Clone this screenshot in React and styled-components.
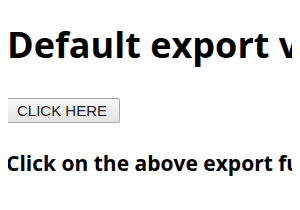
import styled, { createGlobalStyle } from "styled-components";

const GlobalStyle = createGlobalStyle`
body {
  margin: 8px;
  background: #fff;
  font-family: "Open Sans", "Noto Sans", sans-serif;
  color: #000;
}
`;

const Container = styled.div`
display: flex;
flex-direction: column;
align-items: flex-start;
white-space: nowrap;
overflow: hidden;
`;

const Title = styled.h1`
font-size: 36px;
font-weight: 700;
margin: 15px 0 32px -1px;
line-height: 1.2;
`;

const Button = styled.button`
font-family: "Liberation Sans", Arial, sans-serif;
font-size: 15px;
color: #222;
padding: 3px 12px;
background: linear-gradient(#f8f8f8, #e4e4e4);
border: 1px solid #a8a8a8;
border-radius: 2px;
margin-left: -4px;
`;

const Desc = styled.h3`
font-size: 21px;
font-weight: 700;
margin: 28px 0 0 -2px;
line-height: 1.2;
`;

const App = () => {
    return (
        <Container>
            <GlobalStyle />
            <Title>Default export value</Title>
            <Button>CLICK HERE</Button>
            <Desc>Click on the above export function button</Desc>
        </Container>
    )
}

export default App;
